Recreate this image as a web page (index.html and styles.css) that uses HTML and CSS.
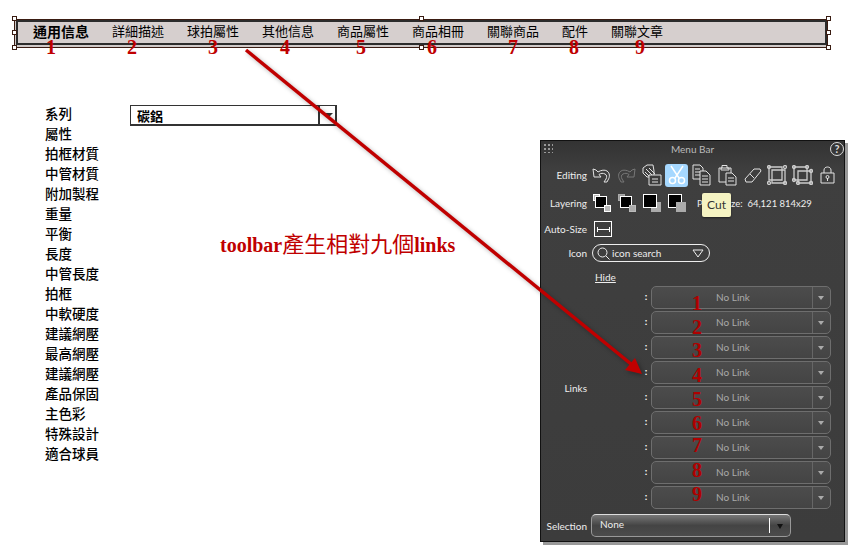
FILE: index.html
```html
<!DOCTYPE html>
<html lang="zh-Hant">
<head>
    <meta charset="UTF-8">
    <title>Menu Bar</title>
    <link rel="stylesheet" href="styles.css">
</head>
<body>
    <div class="toolbar">
        <div class="toolbar-inner">
            <span class="tab tab-active">通用信息</span>
            <span class="tab">詳細描述</span>
            <span class="tab">球拍屬性</span>
            <span class="tab">其他信息</span>
            <span class="tab">商品屬性</span>
            <span class="tab">商品相冊</span>
            <span class="tab">關聯商品</span>
            <span class="tab tab-short">配件</span>
            <span class="tab">關聯文章</span>
        </div>
        <i class="handle h-tl"></i><i class="handle h-tm"></i><i class="handle h-tr"></i>
        <i class="handle h-ml"></i><i class="handle h-mr"></i>
        <i class="handle h-bl"></i><i class="handle h-bm"></i><i class="handle h-br"></i>
        <b class="num tn1">1</b><b class="num tn2">2</b><b class="num tn3">3</b>
        <b class="num tn4">4</b><b class="num tn5">5</b><b class="num tn6">6</b>
        <b class="num tn7">7</b><b class="num tn8">8</b><b class="num tn9">9</b>
    </div>

    <div class="form">
        <ul class="fields">
            <li>系列</li>
            <li>屬性</li>
            <li>拍框材質</li>
            <li>中管材質</li>
            <li>附加製程</li>
            <li>重量</li>
            <li>平衡</li>
            <li>長度</li>
            <li>中管長度</li>
            <li>拍框</li>
            <li>中軟硬度</li>
            <li>建議網壓</li>
            <li>最高網壓</li>
            <li>建議網壓</li>
            <li>產品保固</li>
            <li>主色彩</li>
            <li>特殊設計</li>
            <li>適合球員</li>
        </ul>
        <div class="combo">
            <span class="combo-text">碳鋁</span>
            <span class="combo-btn"></span>
        </div>
    </div>

    <div class="note">toolbar<span class="note-cjk">產生相對九個</span>links</div>

    <div class="panel">
        <div class="panel-title">
            <span class="grip"></span>
            <span class="title-text">Menu Bar</span>
            <span class="help">?</span>
        </div>

        <div class="row row-editing">
            <span class="label">Editing</span>
            <div class="icons">
                <svg class="ic" width="19" height="16" viewBox="0 0 19 16"><path d="M1 2l3 1 2 2c3-2 7-2.500 9-1 3 2 3 6 1 9l-1 2h-3l2-3c1-2 1-4-1-5-2-1-4-1-6 .5L9 10H2z"/></svg>
                <svg class="ic ic-dim" width="20" height="16" viewBox="0 0 20 16"><path d="M19 2l-3 1-2 2c-3-2-7-2.500-9-1-3 2-3 6-1 9l1 2h3l-2-3c-1-2-1-4 1-5 2-1 4-1 6 .5L11 10h7z"/></svg>
                <svg class="ic ic-copystyle" width="20" height="22" viewBox="0 0 20 22"><path d="M1 4l4-3h6l1 6v6H5L1 9z"/><path d="M4 5l7 7M7 4l6 6M3 8l5 5"/><path d="M7 11h12v10H7z" fill="#3c3c3c"/><path d="M10 15h6M10 18h6"/></svg>
                <span class="cut">
                    <svg class="ic ic-cut" width="20" height="20" viewBox="0 0 20 20"><path d="M4 1l8 12M16 1L8 13"/><circle cx="5.500" cy="15.500" r="3"/><circle cx="14.500" cy="15.500" r="3"/></svg>
                </span>
                <svg class="ic" width="19" height="22" viewBox="0 0 19 22"><path d="M1 1h7l3 3v11H1z"/><path d="M3 5h5M3 8h6M3 11h6"/><path d="M8 7h6l4 4v10H8z" fill="#3c3c3c"/><path d="M10 12h6M10 15h6M10 18h6"/></svg>
                <svg class="ic ic-gap" width="19" height="22" viewBox="0 0 19 22"><path d="M1 4h12v14H1z"/><path d="M4 4V1.500h5V4h2v2H3V4z"/><path d="M8 9h6l4 4v8H8z" fill="#3c3c3c"/><path d="M10 14h6M10 17h6"/></svg>
                <svg class="ic ic-gap" width="18" height="17" viewBox="0 0 18 17"><path d="M1 12L10 2h6l1 2-9 11H2z"/><path d="M6 7l4 4"/></svg>
                <svg class="ic ic-group" width="20" height="20" viewBox="0 0 20 20"><path d="M2 2h13v13H2z"/><path d="M5 5h13v13H5z"/><circle cx="2" cy="2" r="1.500"/><circle cx="18" cy="2" r="1.500"/><circle cx="2" cy="18" r="1.500"/><circle cx="18" cy="18" r="1.500"/></svg>
                <svg class="ic ic-group" width="21" height="20" viewBox="0 0 21 20"><path d="M2 2h13v13H2z"/><path d="M6 6h13v12H6z"/><circle cx="2" cy="2" r="1.500"/><circle cx="15" cy="2" r="1.500"/><circle cx="2" cy="15" r="1.500"/><circle cx="19" cy="6" r="1.500"/><circle cx="6" cy="18" r="1.500"/><circle cx="19" cy="18" r="1.500"/></svg>
                <svg class="ic ic-gap" width="15" height="18" viewBox="0 0 15 18"><path d="M1 7h13v10H1z"/><path d="M4 7V4c0-4 7-4 7 0v3"/><circle cx="7.500" cy="11" r="1.500"/><path d="M7.500 12v3"/></svg>
            </div>
        </div>

        <div class="row row-layering">
            <span class="label">Layering</span>
            <div class="layers">
                <span class="layer"><i class="sq-top"></i><i class="sq-black"></i><i class="sq-bot"></i></span>
                <span class="layer layer-b"><i class="sq-top"></i><i class="sq-black"></i><i class="sq-bot"></i></span>
                <span class="layer layer-c"><i class="sq-black"></i><i class="sq-bot"></i></span>
                <span class="layer layer-d"><i class="sq-black"></i><i class="sq-bot"></i></span>
            </div>
            <span class="size-info">Pos &amp; Size:&nbsp; 64,121 814x29</span>
            <span class="tooltip">Cut</span>
        </div>

        <div class="row row-auto">
            <span class="label">Auto-Size</span>
            <span class="auto-btn"><svg width="13" height="5" viewBox="0 0 13 5"><path d="M.5 0v5M12.500 0v5M1 2.500h11" stroke="#fff" fill="none"/></svg></span>
        </div>

        <div class="row row-icon">
            <span class="label">Icon</span>
            <div class="search">
                <svg width="13" height="13" viewBox="0 0 13 13"><circle cx="5.500" cy="5.500" r="4.500" fill="none" stroke="#eee"/><path d="M9 9l3.500 3.500" stroke="#eee" fill="none"/></svg>
                <span class="search-text">icon search</span>
                <svg class="search-arrow" width="12" height="9" viewBox="0 0 12 9"><path d="M1 1h10L6 8z" fill="none" stroke="#eee"/></svg>
            </div>
        </div>

        <a class="hide-link">Hide</a>

        <div class="links">
            <span class="label label-links">Links</span>
            <div class="link-list">
                <div class="link-row"><span class="colon">:</span><div class="link-box"><b class="pnum pn1">1</b><span class="link-text">No Link</span><span class="link-arrow"></span></div></div>
                <div class="link-row"><span class="colon">:</span><div class="link-box"><b class="pnum pn2">2</b><span class="link-text">No Link</span><span class="link-arrow"></span></div></div>
                <div class="link-row"><span class="colon">:</span><div class="link-box"><b class="pnum pn3">3</b><span class="link-text">No Link</span><span class="link-arrow"></span></div></div>
                <div class="link-row"><span class="colon">:</span><div class="link-box"><b class="pnum pn4">4</b><span class="link-text">No Link</span><span class="link-arrow"></span></div></div>
                <div class="link-row"><span class="colon">:</span><div class="link-box"><b class="pnum pn5">5</b><span class="link-text">No Link</span><span class="link-arrow"></span></div></div>
                <div class="link-row"><span class="colon">:</span><div class="link-box"><b class="pnum pn6">6</b><span class="link-text">No Link</span><span class="link-arrow"></span></div></div>
                <div class="link-row"><span class="colon">:</span><div class="link-box"><b class="pnum pn7">7</b><span class="link-text">No Link</span><span class="link-arrow"></span></div></div>
                <div class="link-row"><span class="colon">:</span><div class="link-box"><b class="pnum pn8">8</b><span class="link-text">No Link</span><span class="link-arrow"></span></div></div>
                <div class="link-row"><span class="colon">:</span><div class="link-box"><b class="pnum pn9">9</b><span class="link-text">No Link</span><span class="link-arrow"></span></div></div>
            </div>
        </div>

        <div class="row row-selection">
            <span class="label">Selection</span>
            <div class="select">
                <span class="select-text">None</span>
                <span class="select-bar"></span>
                <span class="select-arrow"></span>
            </div>
        </div>
    </div>

    <svg class="arrow" width="868" height="559" viewBox="0 0 868 559">
        <path d="M246 50L631 364" stroke="#c00000" stroke-width="3.5" fill="none"/>
        <path d="M642 374L635 358L625 370z" fill="#c00000"/>
    </svg>
</body>
</html>
```

FILE: styles.css
```css
html, body {
    margin: 0;
    padding: 0;
}
body {
    position: relative;
    width: 868px;
    height: 559px;
    overflow: hidden;
    background-color: white;
    font-family: "Noto Sans CJK TC", "Liberation Sans", sans-serif;
    color: black;
}

/* top toolbar */
.toolbar {
    position: relative;
    box-sizing: border-box;
    width: 814px;
    height: 29px;
    margin: 19px 0 0 14px;
    border: 1px solid #3a1c12;
    background-color: #cfc9c8;
}
.toolbar-inner {
    box-sizing: border-box;
    width: 811px;
    height: 25px;
    margin-left: 1px;
    padding: 0 0 4px 15px;
    display: flex;
    align-items: center;
    background-color: #d6cfce;
    border: 2px solid #2c2c2c;
}
.tab {
    width: 75px;
    font-size: 13px;
    line-height: 20px;
    white-space: nowrap;
}
.tab-active {
    width: 79px;
    font-size: 14px;
    font-weight: bold;
}
.tab-short {
    width: 49px;
}
.handle {
    position: absolute;
    width: 3px;
    height: 3px;
    background: white;
    border: 1px solid #3a1c12;
}
.h-tl { left: -3px; top: -4px; }
.h-tm { left: 404px; top: -4px; }
.h-tr { right: -4px; top: -4px; }
.h-ml { left: -3px; top: 10px; }
.h-mr { right: -4px; top: 10px; }
.h-bl { left: -3px; bottom: -3px; }
.h-bm { left: 404px; bottom: -3px; }
.h-br { right: -4px; bottom: -3px; }

.num {
    position: absolute;
    top: 17px;
    font-family: "Liberation Serif", serif;
    font-size: 20px;
    line-height: 20px;
    color: #c00000;
}
.tn1 { left: 31px; }
.tn2 { left: 112px; }
.tn3 { left: 193px; }
.tn4 { left: 265px; }
.tn5 { left: 341px; }
.tn6 { left: 412px; }
.tn7 { left: 493px; }
.tn8 { left: 554px; }
.tn9 { left: 620px; }

/* field list */
.form {
    display: flex;
    align-items: flex-start;
    margin: 55px 0 0 45px;
}
.fields {
    list-style: none;
    margin: 0;
    padding: 0;
    width: 85px;
}
.fields li {
    font-size: 13.5px;
    line-height: 20px;
    font-weight: 500;
}
.combo {
    box-sizing: border-box;
    display: flex;
    width: 207px;
    height: 21px;
    margin-top: 2px;
    border: 2px solid #333;
    border-width: 1px 2px 2px 1px;
}
.combo-text {
    flex: 1;
    padding-left: 6px;
    font-size: 13px;
    font-weight: bold;
    line-height: 19px;
}
.combo-btn {
    position: relative;
    width: 15px;
    border-left: 2px solid #333;
}
.combo-btn::after {
    content: "";
    position: absolute;
    left: 3px;
    top: 7px;
    border: 5px solid transparent;
    border-top-color: #333;
    border-bottom-width: 0;
}

.note {
    position: absolute;
    left: 220px;
    top: 229px;
    font-family: "Liberation Serif", serif;
    font-size: 20px;
    line-height: 26px;
    font-weight: bold;
    color: #c00000;
}
.note-cjk {
    font-family: "Noto Sans CJK TC", sans-serif;
    font-size: 22px;
    font-weight: normal;
}

/* dark panel */
.panel {
    position: absolute;
    left: 540px;
    top: 140px;
    box-sizing: border-box;
    width: 305px;
    height: 402px;
    display: flex;
    flex-direction: column;
    background: linear-gradient(#333 0, #3f3f3f 30px, #3c3c3c 100%);
    border: 1px solid #111;
    box-shadow: 3px 3px 0 #999;
    font-family: Lato, "Liberation Sans", sans-serif;
    font-size: 10px;
    color: #eee;
}
.panel-title {
    position: relative;
    height: 19px;
    text-align: center;
    line-height: 17px;
    color: #bbb;
}
.grip {
    position: absolute;
    left: 2px;
    top: 2px;
    width: 10px;
    height: 10px;
    background-image: radial-gradient(#999 1px, transparent 1px);
    background-size: 4px 4px;
}
.title-text {
    font-size: 10px;
}
.help {
    position: absolute;
    right: 0;
    top: 1px;
    width: 12px;
    height: 12px;
    border: 1px solid #ddd;
    border-radius: 50%;
    color: #ddd;
    font-size: 11px;
    line-height: 12px;
    font-weight: bold;
    text-align: center;
}
.row {
    position: relative;
    display: flex;
    align-items: center;
    gap: 5px;
}
.label {
    width: 46px;
    flex: none;
    text-align: right;
    white-space: nowrap;
}
.row-editing {
    height: 26px;
    margin-top: 2px;
}
.icons {
    display: flex;
    align-items: center;
    gap: 5px;
}
.ic {
    flex: none;
    fill: none;
    stroke: #e2e2e2;
    stroke-width: 1;
}
.ic-dim {
    stroke: #777;
}
.ic-copystyle {
    margin-left: 1px;
}
.ic-gap {
    margin-left: 2px;
}
.ic-group {
    stroke: #ccc;
    stroke-width: 1.3;
}
.cut {
    display: flex;
    align-items: center;
    justify-content: center;
    width: 23px;
    height: 23px;
    margin: 0 -1px 0 -2px;
    background-color: #a6d8ff;
    border-radius: 3px;
}
.ic-cut {
    stroke: white;
    stroke-width: 1.5;
}
.row-layering {
    height: 24px;
    margin-top: 3px;
}
.layers {
    display: flex;
    gap: 7px;
    margin-left: 1px;
}
.layer {
    position: relative;
    display: block;
    width: 18px;
    height: 18px;
}
.layer i {
    position: absolute;
    display: block;
    box-sizing: border-box;
}
.sq-top {
    left: 0;
    top: 0;
    width: 7px;
    height: 7px;
    background: #bbb;
    border: 1px solid #fff;
}
.sq-black {
    left: 2px;
    top: 2px;
    width: 12px;
    height: 12px;
    background: black;
    border: 1px solid white;
}
.sq-bot {
    right: 0;
    bottom: 0;
    width: 7px;
    height: 7px;
    background: #bbb;
    border: 1px solid white;
}
.layer-b .sq-top { background: #999; border-color: #aaa; }
.layer-b .sq-bot { background: #aaa; border-color: #bbb; }
.layer-c .sq-black, .layer-d .sq-black {
    left: 0;
    top: 0;
    width: 14px;
    height: 14px;
}
.layer-c .sq-bot, .layer-d .sq-bot {
    width: 10px;
    height: 10px;
    background: #aaa;
    border-color: #aaa;
}
.layer-c .sq-bot { z-index: -1; }
.layer-c { z-index: 0; }
.size-info {
    margin-left: 6px;
    font-size: 9.5px;
    white-space: nowrap;
}
.tooltip {
    position: absolute;
    left: 161px;
    top: 2px;
    width: 29px;
    height: 24px;
    background-color: #f5f3c2;
    border-radius: 2px;
    color: #333;
    font-size: 12px;
    line-height: 24px;
    text-align: center;
    box-shadow: 0 1px 2px rgba(0, 0, 0, .5);
}
.row-auto {
    height: 16px;
    margin-top: 6px;
}
.auto-btn {
    box-sizing: border-box;
    display: flex;
    align-items: center;
    justify-content: center;
    width: 18px;
    height: 16px;
    margin-left: 2px;
    border: 1px solid white;
}
.row-icon {
    height: 18px;
    margin-top: 7px;
}
.search {
    box-sizing: border-box;
    display: flex;
    align-items: center;
    gap: 2px;
    width: 118px;
    height: 18px;
    padding: 0 5px 0 4px;
    border: 1px solid #eee;
    border-radius: 9px;
}
.search-text {
    flex: 1;
}
.hide-link {
    margin: 8px 0 0 54px;
    line-height: 14px;
    text-decoration: underline;
}
.links {
    display: flex;
    align-items: center;
    margin-top: 2px;
}
.label-links {
    margin-top: -20px;
}
.link-list {
    display: flex;
    flex-direction: column;
    gap: 2px;
    margin-left: 54px;
}
.link-row {
    display: flex;
    align-items: center;
    height: 23px;
}
.colon {
    width: 10px;
    text-align: center;
    margin-top: -4px;
    font-weight: bold;
    color: #fff;
}
.link-box {
    position: relative;
    box-sizing: border-box;
    display: flex;
    align-items: center;
    width: 180px;
    height: 23px;
    background: linear-gradient(#4c4c4c, #444);
    border: 1px solid #6e6e6e;
    border-radius: 5px;
    color: #aaa;
}
.link-text {
    flex: 1;
    text-align: center;
    padding: 0 0 2px 2px;
}
.link-arrow {
    position: relative;
    align-self: stretch;
    width: 17px;
    border-left: 1px solid #666;
}
.link-arrow::after {
    content: "";
    position: absolute;
    left: 5px;
    top: 9px;
    border: 3px solid transparent;
    border-top: 4px solid #aaa;
    border-bottom-width: 0;
}
.pnum {
    position: absolute;
    left: 40px;
    font-family: "Liberation Serif", serif;
    font-size: 20px;
    line-height: 20px;
    color: #b00000;
}
.pn1 { top: 6px; }
.pn2 { top: 5px; }
.pn3 { top: 3px; }
.pn4 { top: 3px; }
.pn5 { top: 2px; }
.pn6 { top: 1px; }
.pn7 { top: -2px; }
.pn8 { top: -2px; }
.pn9 { top: -3px; }
.row-selection {
    height: 23px;
    margin-top: 5px;
    gap: 4px;
}
.select {
    box-sizing: border-box;
    display: flex;
    align-items: center;
    width: 200px;
    height: 23px;
    background: linear-gradient(#777, #444 50%, #4c4c4c);
    border: 1px solid #999;
    border-top-color: #ddd;
    border-radius: 5px;
}
.select-text {
    flex: 1;
    padding-left: 8px;
    margin-top: -3px;
}
.select-bar {
    width: 1px;
    height: 15px;
    background: white;
}
.select-arrow {
    margin: 2px 7px 0 7px;
    border: 3.5px solid transparent;
    border-top: 5px solid #111;
    border-bottom-width: 0;
}

.arrow {
    position: absolute;
    left: 0;
    top: 0;
    pointer-events: none;
    filter: drop-shadow(2px 2px 2px rgba(0, 0, 0, .3));
}
```
